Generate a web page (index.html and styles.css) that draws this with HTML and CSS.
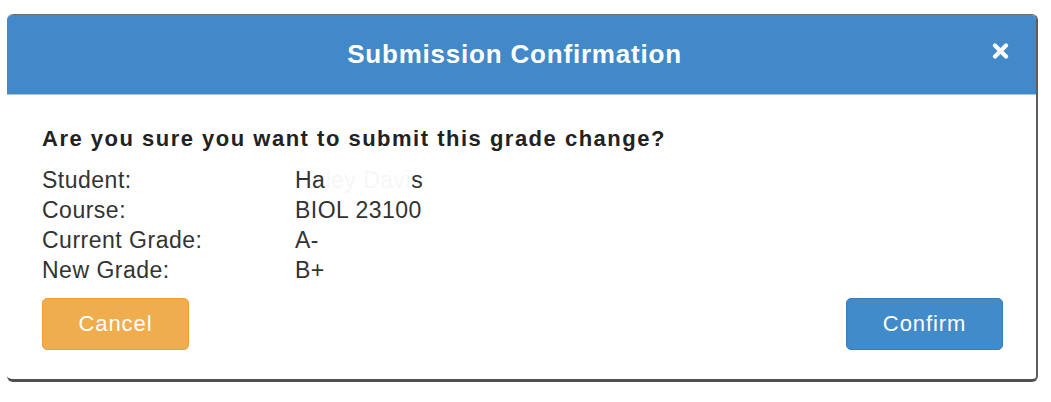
FILE: index.html
```html
<!DOCTYPE html>
<html lang="en">
<head>
<meta charset="utf-8">
<title>Submission Confirmation</title>
<link rel="stylesheet" href="styles.css">
</head>
<body>
<div class="page">
  <div class="modal">
    <div class="modal-header">
      <h1 class="modal-title">Submission Confirmation</h1>
      <button class="close" aria-label="Close">
        <svg width="17" height="16" viewBox="0 0 17 16"><path d="M3 2.5 L14 13.5 M14 2.5 L3 13.5" stroke="#fff" stroke-width="4.2" stroke-linecap="round"/></svg>
      </button>
    </div>
    <div class="modal-body">
      <p class="question">Are you sure you want to submit this grade change?</p>
      <div class="details">
        <span class="label">Student:</span><span class="value">Ha<span class="redact">ley Davi</span>s</span>
        <span class="label">Course:</span><span class="value">BIOL 23100</span>
        <span class="label">Current Grade:</span><span class="value">A-</span>
        <span class="label">New Grade:</span><span class="value">B+</span>
      </div>
    </div>
    <div class="modal-footer">
      <button class="btn btn-warning">Cancel</button>
      <button class="btn btn-primary">Confirm</button>
    </div>
  </div>
</div>
</body>
</html>
```

FILE: styles.css
```css
html, body {
  margin: 0;
  padding: 0;
  background: #ffffff;
}
body {
  font-family: "Liberation Sans", Arial, sans-serif;
  color: #333;
}
.page {
  padding: 14px 0 0 7px;
}
.modal {
  width: 1029px;
  background: #fff;
  border-top: 1px solid #6e6e6e;
  border-right: 2px solid #5e5e5e;
  border-bottom: 3px solid #505050;
  border-radius: 6px;
  overflow: hidden;
}
.modal-header {
  height: 79px;
  background: #4189c8;
  border-bottom: 1px solid #a9c6e2;
  display: flex;
  align-items: center;
  padding: 0 27px 0 30px;
}
.modal-title {
  flex: 1;
  margin: 0;
  text-align: center;
  color: #fff;
  font-size: 26px;
  font-weight: bold;
  letter-spacing: 0.8px;
}
.close {
  background: none;
  border: 0;
  padding: 0;
  width: 17px;
  height: 16px;
  margin-bottom: 8px;
  display: flex;
}
.modal-body {
  padding: 31px 35px 0 35px;
}
.question {
  margin: 0 0 14px 0;
  font-size: 22px;
  line-height: 25px;
  font-weight: bold;
  color: #222;
  letter-spacing: 1.5px;
}
.details {
  display: grid;
  grid-template-columns: 253px auto;
  font-size: 23px;
  line-height: 30px;
  letter-spacing: 0.5px;
  color: #333;
}
.redact {
  color: #f7f7f7;
}
.modal-footer {
  display: flex;
  justify-content: space-between;
  padding: 13px 33px 29px 35px;
}
.btn {
  height: 52px;
  border-radius: 5px;
  font-family: "Liberation Sans", Arial, sans-serif;
  font-size: 22px;
  letter-spacing: 0.9px;
  color: #fff;
  cursor: pointer;
}
.btn-warning {
  width: 147px;
  background: #f0ad4e;
  border: 1px solid #eea236;
}
.btn-primary {
  width: 157px;
  background: #428bca;
  border: 1px solid #357ebd;
}
```
